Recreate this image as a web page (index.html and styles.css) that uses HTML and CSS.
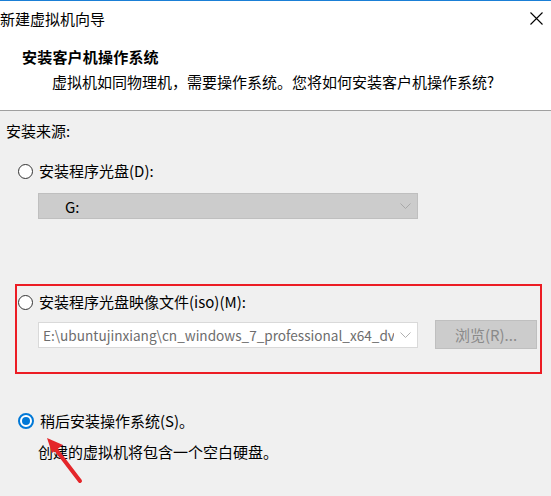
FILE: index.html
```html
<!DOCTYPE html>
<html lang="zh-CN">
<head>
<meta charset="utf-8">
<title>新建虚拟机向导</title>
<link rel="stylesheet" href="styles.css">
</head>
<body>
<div class="window">
  <div class="header">
    <div class="titlebar">
      <span class="title">新建虚拟机向导</span>
      <svg class="close" width="13" height="13" viewBox="0 0 13 13"><path d="M0.5 0.5L12.5 12.5M12.5 0.5L0.5 12.5" stroke="#000" stroke-width="1.1" fill="none"/></svg>
    </div>
    <div class="heading">安装客户机操作系统</div>
    <div class="subheading">虚拟机如同物理机，需要操作系统。您将如何安装客户机操作系统?</div>
  </div>
  <div class="body">
    <div class="label">安装来源:</div>
    <div class="radio-row first">
      <span class="radio"></span>
      <span class="radio-text">安装程序光盘(D):</span>
    </div>
    <div class="combo disabled combo-one">
      <span class="combo-text">G:</span>
      <svg class="chev" width="11" height="6" viewBox="0 0 11 6"><path d="M0.5 0.5L5.5 5.5L10.5 0.5" stroke="#a8a8a8" fill="none"/></svg>
    </div>
    <div class="highlight">
      <div class="radio-row">
        <span class="radio"></span>
        <span class="radio-text">安装程序光盘映像文件(iso)(M):</span>
      </div>
      <div class="iso-row">
        <div class="combo combo-two">
          <span class="combo-text path">E:\ubuntujinxiang\cn_windows_7_professional_x64_dv</span>
          <svg class="chev" width="11" height="6" viewBox="0 0 11 6"><path d="M0.5 0.5L5.5 5.5L10.5 0.5" stroke="#b0b0b0" fill="none"/></svg>
        </div>
        <div class="browse">浏览(R)...</div>
      </div>
    </div>
    <div class="radio-row later">
      <span class="radio checked"></span>
      <span class="radio-text">稍后安装操作系统(S)。</span>
    </div>
    <div class="desc">创建的虚拟机将包含一个空白硬盘。</div>
  </div>
  <svg class="arrow" width="60" height="60" viewBox="0 0 60 60">
    <line x1="40" y1="50" x2="14" y2="16" stroke="#e4262a" stroke-width="4" stroke-linecap="round"/>
    <polygon points="7,7 23,14 12,22" fill="#e4262a"/>
  </svg>
</div>
</body>
</html>
```
FILE: styles.css
```css
html, body {
  margin: 0;
  padding: 0;
}
body {
  width: 551px;
  height: 496px;
  overflow: hidden;
  background: #f0f0f0;
  font-family: "Noto Sans CJK SC", "Noto Sans", sans-serif;
  font-size: 15px;
  color: #000;
}
.window {
  position: relative;
  width: 551px;
  height: 496px;
  border-top: 1px solid #1a7fd6;
  box-sizing: border-box;
  background: #f0f0f0;
}
.header {
  background: #fff;
  border-bottom: 1px solid #a0a0a0;
  height: 110px;
  box-sizing: border-box;
}
.titlebar {
  height: 36px;
  display: flex;
  align-items: center;
  justify-content: space-between;
}
.title {
  line-height: 36px;
  font-size: 15px;
}
.close {
  margin-right: 8px;
  margin-top: -1px;
}
.heading {
  font-weight: bold;
  line-height: 20px;
  margin-top: 10px;
  padding-left: 22px;
  letter-spacing: 0.2px;
}
.subheading {
  line-height: 20px;
  margin-top: 5px;
  padding-left: 52px;
}
.body {
  padding-top: 10px;
}
.label {
  line-height: 20px;
  padding-left: 6px;
}
.radio-row {
  display: flex;
  align-items: center;
  height: 20px;
}
.radio-row.first {
  margin-top: 20px;
  padding-left: 18px;
}
.radio {
  width: 15px;
  height: 15px;
  border: 1px solid #333;
  border-radius: 50%;
  box-sizing: border-box;
  background: #fff;
  flex: none;
  position: relative;
}
.radio.checked {
  width: 16px;
  height: 16px;
  border: 2px solid #0078d7;
}
.radio.checked::after {
  content: "";
  position: absolute;
  left: 2px;
  top: 2px;
  width: 8px;
  height: 8px;
  border-radius: 50%;
  background: #0078d7;
}
.radio-text {
  margin-left: 6px;
  line-height: 20px;
}
.combo {
  height: 26px;
  box-sizing: border-box;
  display: flex;
  align-items: center;
  justify-content: space-between;
}
.combo.disabled {
  background: #cccccc;
  border: 1px solid #bfbfbf;
}
.combo-one {
  margin: 12px 0 0 38px;
  width: 380px;
}
.combo-one .combo-text {
  padding-left: 26px;
}
.chev {
  margin-right: 6px;
  flex: none;
}
.highlight {
  margin: 65px 9px 0 15px;
  border: 2px solid #ec1c24;
  padding: 6px 0 23px 0;
}
.highlight .radio-row {
  padding-left: 1px;
}
.iso-row {
  display: flex;
  align-items: center;
  margin-top: 8px;
  padding-left: 21px;
}
.combo-two {
  width: 380px;
  background: #fff;
  border: 1px solid #d9d9d9;
}
.combo-two .path {
  color: #6d6d6d;
  padding-left: 4px;
  width: 351px;
  overflow: hidden;
  white-space: nowrap;
  font-size: 13.6px;
  line-height: 22px;
}
.browse {
  margin-left: 17px;
  width: 102px;
  height: 29px;
  box-sizing: border-box;
  background: #cccccc;
  border: 1px solid #bfbfbf;
  color: #8a8a8a;
  display: flex;
  align-items: center;
  justify-content: center;
}
.radio-row.later {
  margin-top: 37px;
  padding-left: 18px;
}
.desc {
  margin-top: 11px;
  padding-left: 38px;
  line-height: 20px;
}
.arrow {
  position: absolute;
  left: 40px;
  top: 430px;
}
```
